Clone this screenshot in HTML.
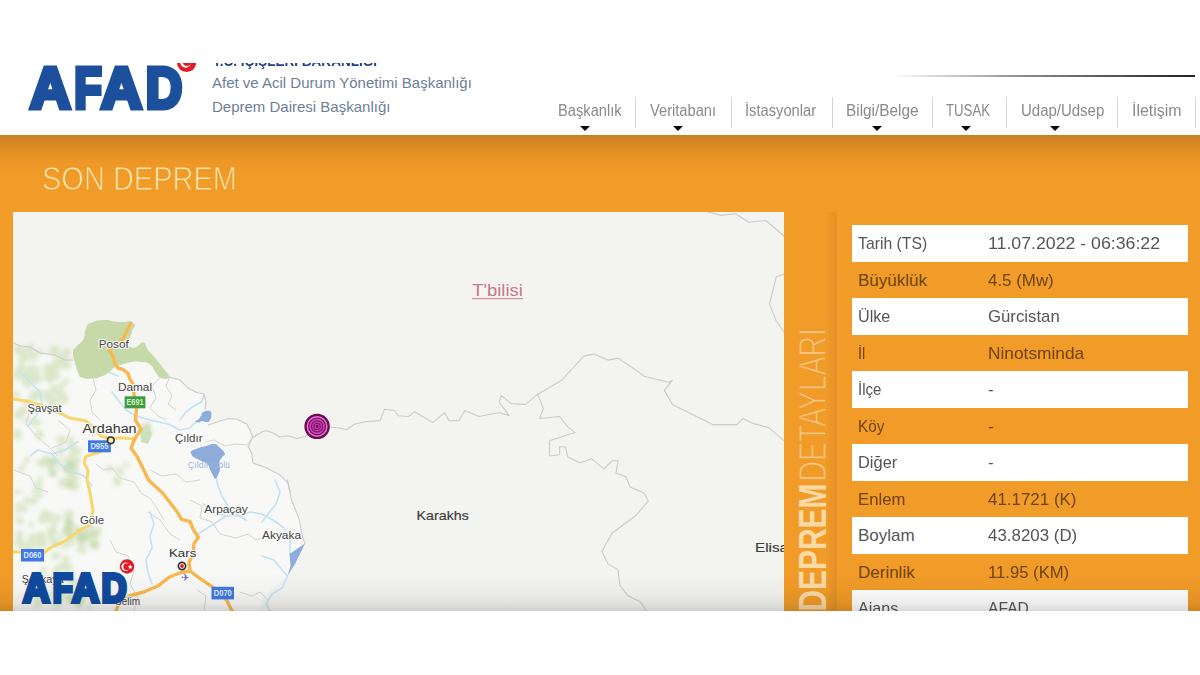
<!DOCTYPE html>
<html lang="tr">
<head>
<meta charset="utf-8">
<title>AFAD - Son Deprem</title>
<style>
*{box-sizing:border-box;margin:0;padding:0}
html,body{width:1200px;height:675px;overflow:hidden;background:#fff}
body{position:relative;font-family:"Liberation Sans",sans-serif}
.abs{position:absolute}
#hdr{position:absolute;left:0;top:0;width:1200px;height:135px;background:#fff;overflow:hidden}
#topcrop{position:absolute;left:0;top:0;width:1200px;height:63px;background:#fff;z-index:5}
.org{position:absolute;left:212px;white-space:nowrap;color:#6d7f98;font-size:15px;line-height:18px;transform-origin:0 50%}
#org0{top:51.5px;transform:scaleX(.903);color:#223d85;font-weight:bold;font-size:15px;left:212.5px}
#org1{top:74px}
#org2{top:98px}
#hline{position:absolute;left:890px;top:75px;width:305px;height:2px;background:linear-gradient(90deg,rgba(40,40,40,0),rgba(40,40,40,.55) 45%,#222 100%)}
.nav{position:absolute;top:101px;font-size:16px;line-height:20px;color:#8a8a8a;white-space:nowrap;transform-origin:0 50%}
.sep{position:absolute;top:96.5px;width:1px;height:31.5px;background:#d4d4d4}
.arr{position:absolute;top:125.7px;width:0;height:0;margin-left:-.5px;border-left:5px solid transparent;border-right:5px solid transparent;border-top:5px solid #0a0a0a}
#main{position:absolute;left:0;top:135px;width:1200px;height:476px;background:#f19b28;overflow:hidden}
#main:before{content:"";position:absolute;left:0;top:0;width:100%;height:40px;background:linear-gradient(180deg,rgba(140,85,30,.42) 0,rgba(150,85,15,.22) 30%,rgba(150,85,10,.07) 65%,rgba(150,85,10,0) 100%)}
#main:after{content:"";position:absolute;left:0;top:437px;width:100%;height:39px;z-index:9;pointer-events:none;background:linear-gradient(180deg,rgba(0,0,0,0) 0,rgba(0,0,0,.025) 45%,rgba(0,0,0,.075) 80%,rgba(0,0,0,.15) 100%)}
#ttl{-webkit-text-stroke:.95px #f19b28;position:absolute;left:42px;top:26px;transform:scaleX(.879);font-size:33px;line-height:36px;color:#fde6b4;white-space:nowrap;transform-origin:0 50%}
#map{position:absolute;left:13px;top:77px;width:771px;height:399px;background:#f3f3f0;overflow:hidden}
#vbar{position:absolute;left:784px;top:77px;width:53px;height:399px;background:linear-gradient(90deg,#f19b28 0,#f19b28 78%,#e39027 100%)}
#tbl{position:absolute;left:852px;top:90px;width:336px}
.row{position:absolute;left:0;width:336px;height:37px;font-size:17px;line-height:37px;color:#6f430e;white-space:nowrap}
.row.w{background:#fff;color:#555}
.row span{position:absolute;top:0;transform-origin:0 50%}
.row .l{left:6px}
.row .v{left:136px}
</style>
</head>
<body>
<div id="hdr">
  <svg id="logo" class="abs" style="left:0;top:0" width="210" height="135" viewBox="0 0 210 135">
    <circle cx="186.6" cy="62.5" r="9.6" fill="#e31b23"/>
    <circle cx="185.6" cy="62.3" r="5.4" fill="#fff"/>
    <circle cx="186.9" cy="61.6" r="4.4" fill="#e31b23"/>
    <text y="108.3" font-family="Liberation Sans, sans-serif" font-weight="bold" font-size="58" fill="#1c4f9c" stroke="#1c4f9c" stroke-width="5" stroke-linejoin="miter"><tspan x="30.1" textLength="40.6" lengthAdjust="spacingAndGlyphs">A</tspan><tspan x="74.2" textLength="27.5" lengthAdjust="spacingAndGlyphs">F</tspan><tspan x="101.1" textLength="40.9" lengthAdjust="spacingAndGlyphs">A</tspan><tspan x="145.8" textLength="36.5" lengthAdjust="spacingAndGlyphs">D</tspan></text>
  </svg>
  <div id="org0" class="org">T.C. İÇİŞLERİ BAKANLIĞI</div>
  <div id="org1" class="org">Afet ve Acil Durum Yönetimi Başkanlığı</div>
  <div id="org2" class="org">Deprem Dairesi Başkanlığı</div>
  <div id="topcrop"></div>
  <div id="hline"></div>
  <div class="nav" style="left:557.6px;transform:scaleX(0.918)">Başkanlık</div>
  <div class="arr" style="left:580.0px"></div>
  <div class="nav" style="left:649.7px;transform:scaleX(0.917)">Veritabanı</div>
  <div class="arr" style="left:673.5px"></div>
  <div class="nav" style="left:745.2px;transform:scaleX(0.919)">İstasyonlar</div>
  <div class="nav" style="left:846.0px;transform:scaleX(0.959)">Bilgi/Belge</div>
  <div class="arr" style="left:872.5px"></div>
  <div class="nav" style="left:946.2px;transform:scaleX(0.825)">TUSAK</div>
  <div class="arr" style="left:961.5px"></div>
  <div class="nav" style="left:1020.7px;transform:scaleX(0.936)">Udap/Udsep</div>
  <div class="arr" style="left:1050.5px"></div>
  <div class="nav" style="left:1131.7px;transform:scaleX(0.997)">İletişim</div>
  <div class="sep" style="left:635.0px"></div>
  <div class="sep" style="left:730.5px"></div>
  <div class="sep" style="left:831.5px"></div>
  <div class="sep" style="left:931.5px"></div>
  <div class="sep" style="left:1005.5px"></div>
  <div class="sep" style="left:1116.5px"></div>
  <div class="sep" style="left:1195.0px"></div>
</div>
<div id="main">
  <div id="ttl">SON DEPREM</div>
  <div id="map">
<svg class="abs" style="left:0;top:0" width="771" height="399" viewBox="13 212 771 399" font-family="Liberation Sans, sans-serif">
  <defs>
    <filter id="bl2" x="-20%" y="-20%" width="140%" height="140%"><feGaussianBlur stdDeviation="2"/></filter>
    <filter id="bl4" x="-20%" y="-20%" width="140%" height="140%"><feGaussianBlur stdDeviation="3.5"/></filter>
    <filter id="bl1" x="-20%" y="-20%" width="140%" height="140%"><feGaussianBlur stdDeviation=".6"/></filter>
  </defs>
  <rect x="13" y="212" width="771" height="399" fill="#f3f3f0"/>
  <!-- Turkey side lighter land -->
  <path id="trland" fill="#f8f8f6" d="M13,343 L20,346 30,347 40,353 55,355 65,360 73,360 76,367 80,377 93,378 108,373 115,367 133,362 150,364 155,372 160,377.5 170,376 180,380 188,388 197,392.5 204,394 206,410 208,425 228,419 237,419 247,424 250,430 252.5,437.5 248,447 252,453 253,463 267,468 280,475 288,483 290,492 291.5,499.5 299,519 303,538.6 305,543.5 295,564 287.5,576 270,590 262,600 258,611 13,611 Z"/>
  <!-- green forest patches -->
  <g filter="url(#bl2)" fill="#d6e4c2" opacity=".85"><circle cx="33.4" cy="356.1" r="4.8"/><circle cx="18.3" cy="376.9" r="3.8"/><circle cx="17.5" cy="375.4" r="2.6"/><circle cx="40.0" cy="351.8" r="2.8"/><circle cx="39.5" cy="392.7" r="2.9"/><circle cx="27.4" cy="381.9" r="5.8"/><circle cx="48.6" cy="369.4" r="5.9"/><circle cx="16.8" cy="394.4" r="3.5"/><circle cx="22.7" cy="354.4" r="3.6"/><circle cx="63.0" cy="357.8" r="4.5"/><circle cx="52.3" cy="368.1" r="4.4"/><circle cx="17.8" cy="351.2" r="3.2"/><circle cx="54.8" cy="371.1" r="3.6"/><circle cx="49.1" cy="372.5" r="3.5"/><circle cx="61.7" cy="385.7" r="3.4"/><circle cx="48.5" cy="376.4" r="5.6"/><circle cx="57.8" cy="363.5" r="5.9"/><circle cx="21.1" cy="370.6" r="5.1"/><circle cx="23.1" cy="374.4" r="2.6"/><circle cx="54.1" cy="389.3" r="4.5"/><circle cx="66.5" cy="364.9" r="4.9"/><circle cx="49.7" cy="379.3" r="4.1"/><circle cx="64.4" cy="399.0" r="4.2"/><circle cx="53.8" cy="351.3" r="5.0"/><circle cx="52.8" cy="401.6" r="5.4"/><circle cx="31.1" cy="368.8" r="4.8"/><circle cx="15.4" cy="372.9" r="3.1"/><circle cx="21.0" cy="351.2" r="5.2"/><circle cx="21.8" cy="361.4" r="3.9"/><circle cx="66.3" cy="352.4" r="4.1"/><circle cx="47.0" cy="395.7" r="5.4"/><circle cx="65.8" cy="363.0" r="4.0"/><circle cx="35.5" cy="395.7" r="5.9"/><circle cx="23.1" cy="357.5" r="3.3"/><circle cx="28.0" cy="374.2" r="4.6"/><circle cx="29.8" cy="348.2" r="4.0"/><circle cx="36.2" cy="378.6" r="5.8"/><circle cx="55.4" cy="375.8" r="4.7"/><circle cx="54.6" cy="350.9" r="5.6"/><circle cx="60.8" cy="395.2" r="5.3"/><circle cx="37.5" cy="369.5" r="2.9"/><circle cx="52.1" cy="351.4" r="2.7"/><circle cx="26.5" cy="356.8" r="3.7"/><circle cx="17.2" cy="348.0" r="3.0"/><circle cx="20.1" cy="367.6" r="2.6"/><circle cx="66.5" cy="381.2" r="3.0"/><circle cx="20.6" cy="415.2" r="3.4"/><circle cx="17.2" cy="434.3" r="5.0"/><circle cx="26.1" cy="420.4" r="2.7"/><circle cx="16.7" cy="415.0" r="3.2"/><circle cx="35.6" cy="408.1" r="2.6"/><circle cx="38.7" cy="422.1" r="2.9"/><circle cx="28.1" cy="403.0" r="3.8"/><circle cx="39.4" cy="434.8" r="4.2"/><circle cx="20.8" cy="415.9" r="2.9"/><circle cx="34.1" cy="422.2" r="4.4"/><circle cx="22.6" cy="410.5" r="4.5"/><circle cx="39.6" cy="434.4" r="4.5"/><circle cx="69.8" cy="478.2" r="3.2"/><circle cx="59.6" cy="466.7" r="2.6"/><circle cx="42.9" cy="464.4" r="3.3"/><circle cx="65.5" cy="484.7" r="3.8"/><circle cx="73.9" cy="485.6" r="5.4"/><circle cx="54.4" cy="462.6" r="3.2"/><circle cx="48.7" cy="462.1" r="4.4"/><circle cx="72.6" cy="481.2" r="3.9"/><circle cx="64.2" cy="480.0" r="2.8"/><circle cx="64.5" cy="483.3" r="4.8"/><circle cx="67.5" cy="470.3" r="3.0"/><circle cx="68.8" cy="466.0" r="4.9"/><circle cx="75.0" cy="467.9" r="3.7"/><circle cx="74.2" cy="477.7" r="3.0"/><circle cx="46.3" cy="460.5" r="5.2"/><circle cx="69.4" cy="460.4" r="5.0"/><circle cx="75.3" cy="475.7" r="3.6"/><circle cx="60.7" cy="459.9" r="2.5"/><circle cx="75.0" cy="475.5" r="4.1"/><circle cx="73.7" cy="469.0" r="5.1"/><circle cx="70.1" cy="462.3" r="3.3"/><circle cx="52.0" cy="463.2" r="4.3"/><circle cx="50.8" cy="468.6" r="2.9"/><circle cx="72.9" cy="466.6" r="3.9"/><circle cx="61.8" cy="483.1" r="3.8"/><circle cx="73.2" cy="471.0" r="4.1"/><circle cx="70.7" cy="440.4" r="3.6"/><circle cx="61.1" cy="440.1" r="4.5"/><circle cx="60.8" cy="450.4" r="4.3"/><circle cx="71.6" cy="447.2" r="3.8"/><circle cx="71.6" cy="457.3" r="2.8"/><circle cx="71.7" cy="445.5" r="3.2"/><circle cx="77.6" cy="451.2" r="3.9"/><circle cx="77.3" cy="460.1" r="3.6"/><circle cx="73.2" cy="451.1" r="3.8"/><circle cx="75.4" cy="450.0" r="3.8"/><circle cx="27.5" cy="545.2" r="4.2"/><circle cx="37.0" cy="545.2" r="3.1"/><circle cx="29.4" cy="545.3" r="4.6"/><circle cx="19.3" cy="505.8" r="3.6"/><circle cx="17.7" cy="511.6" r="2.7"/><circle cx="32.1" cy="537.6" r="4.7"/><circle cx="19.7" cy="534.4" r="4.2"/><circle cx="19.4" cy="542.4" r="4.9"/><circle cx="21.3" cy="545.7" r="3.5"/><circle cx="27.7" cy="547.5" r="4.6"/><circle cx="19.9" cy="520.7" r="3.8"/><circle cx="24.1" cy="509.4" r="3.3"/><circle cx="33.3" cy="500.9" r="3.9"/><circle cx="26.6" cy="500.9" r="3.3"/><circle cx="31.0" cy="524.6" r="2.7"/><circle cx="39.6" cy="537.8" r="4.9"/><circle cx="43.8" cy="521.0" r="2.6"/><circle cx="68.0" cy="521.2" r="2.9"/><circle cx="55.2" cy="543.0" r="5.0"/><circle cx="49.3" cy="517.1" r="5.3"/><circle cx="60.5" cy="535.8" r="2.8"/><circle cx="42.1" cy="535.4" r="3.8"/><circle cx="42.6" cy="543.9" r="4.4"/><circle cx="68.9" cy="514.8" r="5.1"/><circle cx="42.4" cy="541.3" r="3.9"/><circle cx="52.2" cy="530.8" r="5.3"/><circle cx="49.6" cy="516.4" r="4.1"/><circle cx="48.6" cy="515.7" r="3.0"/><circle cx="41.8" cy="518.9" r="3.4"/><circle cx="51.0" cy="537.8" r="3.4"/><circle cx="58.0" cy="518.0" r="3.5"/><circle cx="40.7" cy="520.5" r="2.5"/><circle cx="66.4" cy="530.7" r="3.1"/><circle cx="57.1" cy="543.8" r="2.8"/><circle cx="69.5" cy="526.7" r="4.0"/><circle cx="70.0" cy="525.4" r="4.0"/><circle cx="64.8" cy="545.4" r="3.5"/><circle cx="70.0" cy="536.0" r="4.4"/><circle cx="54.6" cy="523.8" r="2.7"/><circle cx="44.7" cy="514.4" r="4.7"/><circle cx="49.2" cy="517.6" r="2.8"/><circle cx="70.3" cy="541.6" r="4.5"/><circle cx="82.2" cy="533.3" r="3.2"/><circle cx="86.1" cy="531.5" r="3.6"/><circle cx="81.8" cy="549.2" r="4.9"/><circle cx="88.0" cy="533.4" r="4.9"/><circle cx="82.8" cy="535.8" r="2.5"/><circle cx="84.4" cy="538.4" r="3.8"/><circle cx="80.4" cy="539.1" r="2.5"/><circle cx="81.8" cy="530.0" r="3.5"/><circle cx="76.9" cy="528.5" r="3.3"/><circle cx="81.1" cy="540.9" r="3.8"/><circle cx="92.5" cy="542.5" r="4.3"/><circle cx="95.3" cy="536.6" r="3.3"/><circle cx="97.7" cy="531.3" r="4.3"/><circle cx="90.2" cy="529.0" r="4.6"/><circle cx="68.5" cy="567.3" r="4.0"/><circle cx="66.0" cy="558.5" r="3.5"/><circle cx="56.1" cy="571.0" r="4.1"/><circle cx="66.4" cy="566.5" r="4.3"/><circle cx="61.9" cy="568.5" r="3.0"/><circle cx="41.0" cy="558.4" r="3.2"/><circle cx="43.4" cy="571.0" r="3.6"/><circle cx="60.1" cy="567.3" r="3.9"/><circle cx="55.7" cy="556.1" r="4.1"/><circle cx="63.9" cy="565.1" r="3.6"/><circle cx="69.6" cy="578.1" r="4.7"/><circle cx="45.1" cy="578.4" r="3.3"/><circle cx="73.8" cy="582.6" r="4.7"/><circle cx="88.5" cy="591.8" r="3.6"/><circle cx="58.7" cy="597.9" r="4.8"/><circle cx="67.0" cy="596.6" r="2.7"/><circle cx="38.8" cy="584.1" r="4.7"/><circle cx="48.3" cy="594.2" r="2.5"/><circle cx="33.6" cy="584.6" r="4.5"/><circle cx="71.5" cy="597.6" r="3.4"/><circle cx="61.0" cy="590.9" r="3.9"/><circle cx="37.1" cy="604.6" r="3.1"/><circle cx="88.7" cy="606.0" r="2.6"/><circle cx="57.5" cy="602.2" r="5.4"/><circle cx="57.0" cy="584.6" r="3.1"/><circle cx="86.7" cy="582.7" r="4.2"/><circle cx="38.5" cy="592.8" r="5.4"/><circle cx="38.0" cy="602.2" r="4.0"/><circle cx="83.2" cy="598.5" r="3.2"/><circle cx="83.9" cy="591.6" r="2.6"/><circle cx="30.2" cy="591.7" r="3.9"/><circle cx="48.1" cy="580.5" r="3.5"/><circle cx="22.2" cy="492.0" r="2.0"/><circle cx="33.5" cy="492.0" r="2.3"/><circle cx="38.1" cy="485.7" r="4.3"/><circle cx="21.5" cy="468.6" r="3.0"/><circle cx="40.0" cy="479.5" r="2.9"/><circle cx="25.1" cy="463.8" r="2.1"/><circle cx="16.6" cy="491.7" r="2.7"/><circle cx="38.3" cy="462.5" r="2.7"/><circle cx="27.3" cy="459.5" r="2.9"/><circle cx="38.9" cy="494.2" r="4.0"/><circle cx="117.7" cy="482.1" r="3.9"/><circle cx="115.4" cy="477.8" r="2.1"/><circle cx="120.5" cy="471.9" r="3.5"/><circle cx="118.0" cy="468.3" r="2.1"/><circle cx="125.9" cy="464.8" r="2.9"/><circle cx="109.6" cy="468.6" r="3.5"/></g>
  <g filter="url(#bl2)" fill="#c4d9aa" opacity=".8"><circle cx="71.4" cy="464.8" r="3.8"/><circle cx="53.8" cy="472.5" r="3.3"/><circle cx="50.4" cy="462.2" r="2.9"/><circle cx="69.6" cy="470.9" r="2.9"/><circle cx="69.6" cy="483.9" r="3.4"/><circle cx="49.6" cy="463.0" r="2.7"/><circle cx="54.9" cy="460.4" r="3.0"/><circle cx="52.7" cy="472.8" r="4.3"/><circle cx="65.5" cy="468.7" r="3.3"/><circle cx="87.4" cy="536.8" r="3.2"/><circle cx="79.1" cy="535.0" r="4.4"/><circle cx="80.3" cy="539.1" r="3.8"/><circle cx="93.5" cy="533.9" r="3.0"/><circle cx="82.5" cy="537.2" r="3.4"/><circle cx="95.2" cy="545.3" r="4.2"/><circle cx="56.6" cy="586.6" r="3.9"/><circle cx="81.1" cy="595.5" r="3.7"/><circle cx="56.0" cy="593.8" r="4.4"/><circle cx="79.1" cy="603.1" r="4.4"/><circle cx="63.0" cy="588.2" r="2.8"/><circle cx="70.6" cy="599.6" r="4.4"/><circle cx="68.7" cy="532.2" r="4.0"/><circle cx="65.5" cy="530.1" r="2.6"/><circle cx="69.4" cy="523.1" r="4.3"/><circle cx="67.7" cy="524.7" r="2.8"/><path d="M142,424 L150,422 152,434 144,438 Z"/></g>
  <!-- rivers -->
  <g fill="none" stroke="#c4e2f4" stroke-width="1.6" stroke-linecap="round" stroke-linejoin="round">
    <path d="M20,372 L28,380 40,392 42,404 36,416 28,426"/>
    <path d="M78,441.6 L65,450 52,454 38,450 30,456"/>
    <path d="M52,454 L60,464 70,470 84,476 92,486"/>
    <path d="M95,374 L108,372 118,376"/>
    <path d="M112,392 L118,400 126,410 136,416 150,420 168,424 180,430 190,428 197,421"/>
    <path d="M204,395 L201.7,401.7 193,406.7 186,412 180,420"/>
    <path d="M215.8,476.7 L218,486 222,496 228,506 236,514 246,520"/>
    <path d="M203,504 L214,512 226,516 240,516 250,512 262,514 276,522 284,528 290,540 290,554"/>
    <path d="M275,480 L280,492 276,504 268,514 262,522"/>
    <path d="M262,556 L274,560 282,570 287.5,576 282,588 272,594 266,604 270,611"/>
    <path d="M196,536 L204,530 214,524 226,516"/>
    <path d="M150,512 L154,524 150,536 152,548 146,560 148,572 152,584"/>
  </g>
  <!-- lakes -->
  <g fill="#8dacdc">
    <path d="M191.3,451.3 C192.7,449.9 192.8,450.1 196.7,448.7 C200.6,447.3 201.4,447.3 206.0,446.0 C210.6,444.7 210.6,443.8 214.0,444.0 C217.4,444.2 215.8,444.2 218.7,446.7 C221.6,449.2 223.8,450.5 224.7,453.3 C225.6,456.1 223.4,454.8 222.0,457.3 C220.6,459.8 219.8,459.5 219.3,462.7 C218.8,465.9 220.3,466.1 220.0,469.3 C219.7,472.5 219.3,472.2 218.0,474.7 C216.7,477.2 216.7,478.7 215.3,478.7 C213.9,478.7 214.1,477.2 212.7,474.7 C211.3,472.2 211.4,472.2 210.0,469.3 C208.6,466.4 209.8,466.3 207.3,464.0 C204.8,461.7 204.2,462.5 200.7,460.7 C197.2,458.9 196.5,459.1 194.0,457.3 C191.5,455.5 192.0,455.6 191.3,454.0 C190.6,452.4 189.9,452.7 191.3,451.3 Z"/>
    <path d="M195.3,421.3 C195.3,420.5 197.1,420.9 198.7,419.3 C200.3,417.7 200.1,417.2 201.3,415.3 C202.5,413.4 201.0,413.1 203.3,412.0 C205.6,410.9 207.9,410.4 210.0,411.3 C212.1,412.2 211.3,413.0 211.3,415.3 C211.3,417.6 211.1,418.2 210.0,420.0 C208.9,421.8 209.4,421.7 207.3,422.0 C205.2,422.3 204.3,421.2 202.0,421.3 C199.7,421.4 200.5,422.4 198.7,422.4 C196.9,422.4 195.3,422.1 195.3,421.3 Z"/>
    <path d="M305,543.5 L289.5,554 290.5,566 287.5,575.8 295,564 Z"/>
  </g>
  <!-- admin borders (thin gray) -->
  <g fill="none" stroke="#d4d4d8" stroke-width="1" stroke-linejoin="round">
    <path d="M93,378 L96,390 90,400 92,412 100,420"/>
    <path d="M160,377.5 L152,386 156,398 150,408 158,416 166,420"/>
    <path d="M170,376 L166,386 172,396 168,404 176,410"/>
    <path d="M30,410 L26,424 36,436 48,446 58,456"/>
    <path d="M58,420 L70,430 66,442 52,448"/>
    <path d="M96,464 L104,470 112,468 120,478 134,482 142,494 150,498 158,510 164,520"/>
    <path d="M14,470 L30,476 36,488 48,492"/>
    <path d="M252.5,437.5 L246.7,445 235,444 225,446 214,440 206,442"/>
    <path d="M150,470 L162,476 176,474 186,482 200,480"/>
    <path d="M190,500 L202,506 200,518 212,522 220,534 236,538 248,534 256,540 270,536"/>
    <path d="M148,512 L160,520 170,534 180,540"/>
    <path d="M110,540 L116,552 128,556 134,570 130,584 138,598 134,611"/>
    <path d="M197,590 L206,596 204,611"/>
    <path d="M240,592 L252,596 260,592 268,600"/>
  </g>
  <!-- international borders -->
  <g fill="none" stroke="#cbcbce" stroke-width="1.1" stroke-linejoin="round" stroke-linecap="round">
    <path d="M13,343 L20,346 30,347 40,353 55,355 65,360 73,360"/>
    <path d="M168,376.7 L180,380 188.3,388.3 196.7,392.5 204,394 206,402 205,410"/>
    <path d="M208.3,425 L223,420 228,418.7 236.7,419 246.7,424 250,430 252.5,437.5 263,431.5 266.7,430.8 273,433 280,437 288,435.8 296.7,438.5 305,436.5 317,427"/>
    <path d="M252.5,437.5 L248,446.7 251.7,453 253,463 266.7,468 280,475 288,483 290,492 287.5,480"/>
    <path d="M288,483 L291.4,499.5 299,519 303,538.6 305,543.5"/>
    <path d="M317,427 L330,427 340,428 346,429.8 355,424 366.7,421.5 380,420.6 384.4,409.3 394.4,410.5 398.5,415.7 408.5,416.5 414.6,411.7 432.7,422.6 444.8,412.5 448.8,420.6 458.9,420.6 464.9,410.5 479,416.5 499.2,412.5 509.2,415.7 499.2,402.4 501.2,395.6 511.3,403.6 525.4,404.4 537.4,394.4 561.6,380.3 583.8,356.1 593.8,354.1 607.9,360.1 618,358.1 636.1,370.2 644.2,376.3 668.4,382.3 672.4,380.3 664.3,390.4 672.4,404.4 692.5,414.5 712.7,424.6 736.8,424.6 742.9,418.5 753,423.4 769,427.8 784,440.7"/>
    <path d="M537.4,394.4 L543.5,408.5 539.5,418.5 559.6,416.5 567.7,426.6 574.9,432.6 549.5,440.7 549.5,456 559.6,454.8 559.6,446.7 565.6,446.7 567.7,456.8 579.7,462.9 591.8,458.8 603.9,468.9 612,460.8 618,460.8 616,472.9 626.1,477 630.1,487 644.2,493 648.2,501.1 636.1,515.2 612,533.3 601.9,551.5 607.9,563.6 618,569.6 620,585.7 628,595.8 640.2,601.8 646.2,610.7"/>
    <path d="M708,212 L721.6,215.4 735.3,213.7 749,222.2 766,220.5 784,236"/>
    <path d="M784.8,273.5 L776.3,277 769.5,304 776.3,321 784.8,333"/>
  </g>
  <!-- green park (Posof) -->
  <path fill="#c6d9a8" d="M90.0,323.3 C94.8,321.5 95.0,320.5 103.0,320.0 C111.0,319.5 107.7,320.8 116.7,321.7 C125.7,322.6 128.4,320.0 133.0,323.0 C137.6,326.0 133.3,326.0 132.0,331.7 C130.7,337.4 128.6,337.3 128.5,342.0 C128.4,346.7 128.8,346.3 131.7,347.5 C134.5,348.7 135.2,347.4 138.0,346.0 C140.8,344.6 138.9,343.8 141.0,343.0 C143.1,342.2 142.9,341.4 145.0,343.5 C147.1,345.6 144.7,345.4 148.0,350.0 C151.3,354.6 151.5,353.6 156.0,359.0 C160.5,364.4 159.2,362.7 163.0,368.0 C166.8,373.3 169.1,373.7 168.5,376.7 C167.9,379.7 164.9,379.4 161.0,378.0 C157.1,376.6 158.8,376.1 155.5,372.0 C152.2,367.9 154.3,367.5 150.0,364.5 C145.7,361.5 146.1,362.8 141.0,362.0 C135.9,361.2 138.7,360.9 133.0,361.7 C127.3,362.4 127.4,362.9 122.0,364.5 C116.6,366.1 119.2,364.4 115.0,367.0 C110.8,369.6 112.5,370.0 108.0,373.0 C103.5,376.0 104.5,375.4 100.0,377.0 C95.5,378.6 98.4,378.4 93.0,378.5 C87.6,378.6 86.5,379.4 82.0,377.5 C77.5,375.6 80.0,376.1 78.0,372.0 C76.0,367.9 77.0,369.7 75.5,364.0 C74.0,358.3 72.8,358.1 73.0,353.0 C73.2,347.9 73.0,350.9 76.0,347.0 C79.0,343.1 80.3,344.6 83.0,340.0 C85.7,335.4 83.8,335.9 85.0,331.7 C86.2,327.5 85.5,328.5 87.0,326.0 C88.5,323.5 85.2,325.1 90.0,323.3 Z"/>
  <!-- small green near Ardahan -->
  <path fill="#cfe0bd" filter="url(#bl1)" d="M140,430 L148,426 152,434 148,444 141,442 Z"/>

  <!-- yellow roads -->
  <g fill="none" stroke="#f8d66a" stroke-width="3" stroke-linecap="round" stroke-linejoin="round">
    <path d="M13,399 L26,401 40,405 52,410 61.6,414 70.5,418.3 85.6,420.8 94,428 100.7,436 110.8,439 120.8,437.8 133,439"/>
    <path d="M100,452 L93,454 85.6,456.7 84.3,463 88,470.6 87,480 90,493 93,510 91,520 90,525 78,531 67,540 50,548 44,553 30,553 15,551.7 13,552"/>
  </g>
  <!-- orange roads -->
  <g fill="none" stroke="#f7b850" stroke-width="3.4" stroke-linecap="round" stroke-linejoin="round">
    <path d="M130.7,323.3 L127.3,330 123.3,338.7 116,345 109.3,350 113.3,356.7 114.7,363.3 118,368 122.7,369.3 128,373.3 130,379.3 133.3,384.7 134,394 136.6,408 135.3,420 141,429 134.7,439 131,448 137.2,456.7 142.2,466.8 148.5,480 162.6,493 177.3,512 181.5,519.4 190,521.5 193,529 198.4,537.3 194,543.6 193,554 189,562.6 190,571 198.4,577.3 209,584.7 220,592 226.8,600.4 232,611"/>
    <path d="M190,571 L179.4,573 169,577.3 158.4,585.7 143.7,592 129,596 118.4,604.6 116,611"/>
  </g>
  <!-- shields -->
  <g font-size="8.5" font-weight="bold" fill="#fff" text-anchor="middle">
    <rect x="124.6" y="396.3" width="20.8" height="12" fill="#3f9d3f"/>
    <text x="135" y="405.4" textLength="17" lengthAdjust="spacingAndGlyphs" fill="#d8f0d0">E691</text>
    <rect x="88" y="440.3" width="22.8" height="12" fill="#3f78e3"/>
    <text x="99.4" y="449.4" textLength="18" lengthAdjust="spacingAndGlyphs" fill="#dfe8ff">D955</text>
    <rect x="21" y="549" width="23" height="12.5" fill="#3f78e3"/>
    <text x="32.5" y="558.4" textLength="18" lengthAdjust="spacingAndGlyphs" fill="#dfe8ff">D060</text>
    <rect x="211.5" y="586.8" width="22.5" height="12.6" fill="#3f78e3"/>
    <text x="222.8" y="596.2" textLength="18" lengthAdjust="spacingAndGlyphs" fill="#dfe8ff">D070</text>
  </g>
  <!-- city markers -->
  <g>
    <circle cx="110.8" cy="440.3" r="3.3" fill="#f8e9b0" stroke="#333" stroke-width="1.6"/>
    <circle cx="182" cy="566" r="3.6" fill="#fff" stroke="#333" stroke-width="1.7"/>
    <circle cx="182" cy="566" r="1.9" fill="#e02030"/>
    <text x="181" y="581" font-size="10" fill="#6a5fd0" font-family="DejaVu Sans, sans-serif">✈</text>
  </g>
  <!-- labels -->
  <g fill="#454545" stroke="#f8f8f6" stroke-width="2.2" paint-order="stroke" stroke-linejoin="round" font-weight="normal">
    <text x="98.7" y="347.7" font-size="11" textLength="30" lengthAdjust="spacingAndGlyphs">Posof</text>
    <text x="118" y="390.7" font-size="11" textLength="34" lengthAdjust="spacingAndGlyphs">Damal</text>
    <text x="27.6" y="412" font-size="10.5" textLength="34" lengthAdjust="spacingAndGlyphs">Şavşat</text>
    <text x="82.4" y="433.2" font-size="12" textLength="54.2" lengthAdjust="spacingAndGlyphs" fill="#333">Ardahan</text>
    <text x="175" y="442" font-size="11" textLength="27.5" lengthAdjust="spacingAndGlyphs">Çıldır</text>
    <text x="80" y="524" font-size="11" textLength="24" lengthAdjust="spacingAndGlyphs">Göle</text>
    <text x="169" y="557.3" font-size="11.5" textLength="27.3" lengthAdjust="spacingAndGlyphs" fill="#333">Kars</text>
    <text x="204.3" y="513.1" font-size="11" textLength="43.5" lengthAdjust="spacingAndGlyphs">Arpaçay</text>
    <text x="262" y="538.6" font-size="11" textLength="39" lengthAdjust="spacingAndGlyphs">Akyaka</text>
    <text x="21.7" y="582.5" font-size="11" textLength="42" lengthAdjust="spacingAndGlyphs">Şenkaya</text>
    <text x="115" y="604.6" font-size="11" textLength="25" lengthAdjust="spacingAndGlyphs">Selim</text>
    <text x="416.6" y="520" font-size="12.6" textLength="52.2" lengthAdjust="spacingAndGlyphs" fill="#3a3a3a" stroke="#3a3a3a" stroke-width=".15" paint-order="fill">Karakhs</text>
    <text x="755" y="552.3" font-size="12.6" textLength="33" lengthAdjust="spacingAndGlyphs" fill="#3a3a3a" stroke="#3a3a3a" stroke-width=".15" paint-order="fill">Elisa</text>
  </g>
  <text x="188" y="467.5" font-size="8.5" fill="#9db4df" textLength="42" lengthAdjust="spacingAndGlyphs">Çıldır Gölü</text>
  <text x="472.2" y="296.4" font-size="17" fill="#c5788b" textLength="50.6" lengthAdjust="spacingAndGlyphs">T'bilisi</text>
  <line x1="472" y1="298.6" x2="523" y2="298.6" stroke="#d58f9f" stroke-width="1.1"/>
  <!-- quake marker -->
  <g>
    <circle cx="317.1" cy="426.4" r="12.7" fill="#6a0a50"/>
    <circle cx="317.1" cy="426.4" r="10.5" fill="#e576d6"/>
    <circle cx="317.1" cy="426.4" r="9" fill="#74095e"/>
    <circle cx="317.1" cy="426.4" r="7.8" fill="#c845b6"/>
    <circle cx="317.1" cy="426.4" r="6.2" fill="#7e1268"/>
    <circle cx="317.1" cy="426.4" r="5" fill="#c440ae"/>
    <circle cx="317.1" cy="426.4" r="3.7" fill="#7e1268"/>
    <circle cx="317.1" cy="426.4" r="2.6" fill="#c038a6"/>
    <circle cx="317.1" cy="426.4" r="1.3" fill="#700a55"/>
  </g>
  <!-- bottom shade -->
  <!-- AFAD watermark -->
  <g>
    <circle cx="127" cy="566.5" r="7.2" fill="#e31b23"/>
    <circle cx="125.6" cy="566.7" r="4.2" fill="#fff"/>
    <circle cx="126.8" cy="566.7" r="3.4" fill="#e31b23"/>
    <path d="M130.2,564.6 l0.7,1.5 1.6,0.2 -1.2,1.1 0.3,1.6 -1.4,-0.8 -1.4,0.8 0.3,-1.6 -1.2,-1.1 1.6,-0.2 Z" fill="#fff"/>
    <text y="602.3" font-weight="bold" font-size="40.7" fill="#0f4a9f" stroke="#0f4a9f" stroke-width="4" stroke-linejoin="miter"><tspan x="23.1" textLength="26.7" lengthAdjust="spacingAndGlyphs">A</tspan><tspan x="52.7" textLength="20.0" lengthAdjust="spacingAndGlyphs">F</tspan><tspan x="71.9" textLength="27.1" lengthAdjust="spacingAndGlyphs">A</tspan><tspan x="101.4" textLength="25.2" lengthAdjust="spacingAndGlyphs">D</tspan></text>
  </g>
</svg>
  </div>
  <div id="vbar"><svg class="abs" style="left:0;top:0" width="53" height="399" viewBox="0 0 53 399" font-family="Liberation Sans, sans-serif">
    <text transform="translate(42.4,399.5) rotate(-90)" font-size="38" font-weight="bold" fill="#fbdaa6" textLength="128" lengthAdjust="spacingAndGlyphs">DEPREM</text>
    <text transform="translate(42.4,269.5) rotate(-90)" font-size="38" fill="#f8c98a" stroke="#f19b28" stroke-width="1.3" textLength="153.5" lengthAdjust="spacingAndGlyphs">DETAYLARI</text>
  </svg></div>
  <div id="tbl">
    <div class="row w" style="top:0.0px"><span class="l" style="transform:scaleX(0.927)">Tarih (TS)</span><span class="v" style="transform:scaleX(1.042)">11.07.2022 - 06:36:22</span></div>
    <div class="row" style="top:36.5px"><span class="l" style="transform:scaleX(1.0)">Büyüklük</span><span class="v" style="transform:scaleX(0.994)">4.5 (Mw)</span></div>
    <div class="row w" style="top:73.0px"><span class="l" style="transform:scaleX(0.95)">Ülke</span><span class="v" style="transform:scaleX(0.986)">Gürcistan</span></div>
    <div class="row" style="top:109.5px"><span class="l" style="transform:scaleX(0.85)">İl</span><span class="v" style="transform:scaleX(1.018)">Ninotsminda</span></div>
    <div class="row w" style="top:146.0px"><span class="l" style="transform:scaleX(0.884)">İlçe</span><span class="v" style="transform:scaleX(1)">-</span></div>
    <div class="row" style="top:182.5px"><span class="l" style="transform:scaleX(0.898)">Köy</span><span class="v" style="transform:scaleX(1)">-</span></div>
    <div class="row w" style="top:219.0px"><span class="l" style="transform:scaleX(0.967)">Diğer</span><span class="v" style="transform:scaleX(1)">-</span></div>
    <div class="row" style="top:255.5px"><span class="l" style="transform:scaleX(0.982)">Enlem</span><span class="v" style="transform:scaleX(0.996)">41.1721 (K)</span></div>
    <div class="row w" style="top:292.0px"><span class="l" style="transform:scaleX(1.0)">Boylam</span><span class="v" style="transform:scaleX(0.994)">43.8203 (D)</span></div>
    <div class="row" style="top:328.5px"><span class="l" style="transform:scaleX(1.0)">Derinlik</span><span class="v" style="transform:scaleX(0.98)">11.95 (KM)</span></div>
    <div class="row w" style="top:365.0px"><span class="l" style="transform:scaleX(0.948)">Ajans</span><span class="v" style="transform:scaleX(0.921)">AFAD</span></div>
  </div>
</div>
</body>
</html>
